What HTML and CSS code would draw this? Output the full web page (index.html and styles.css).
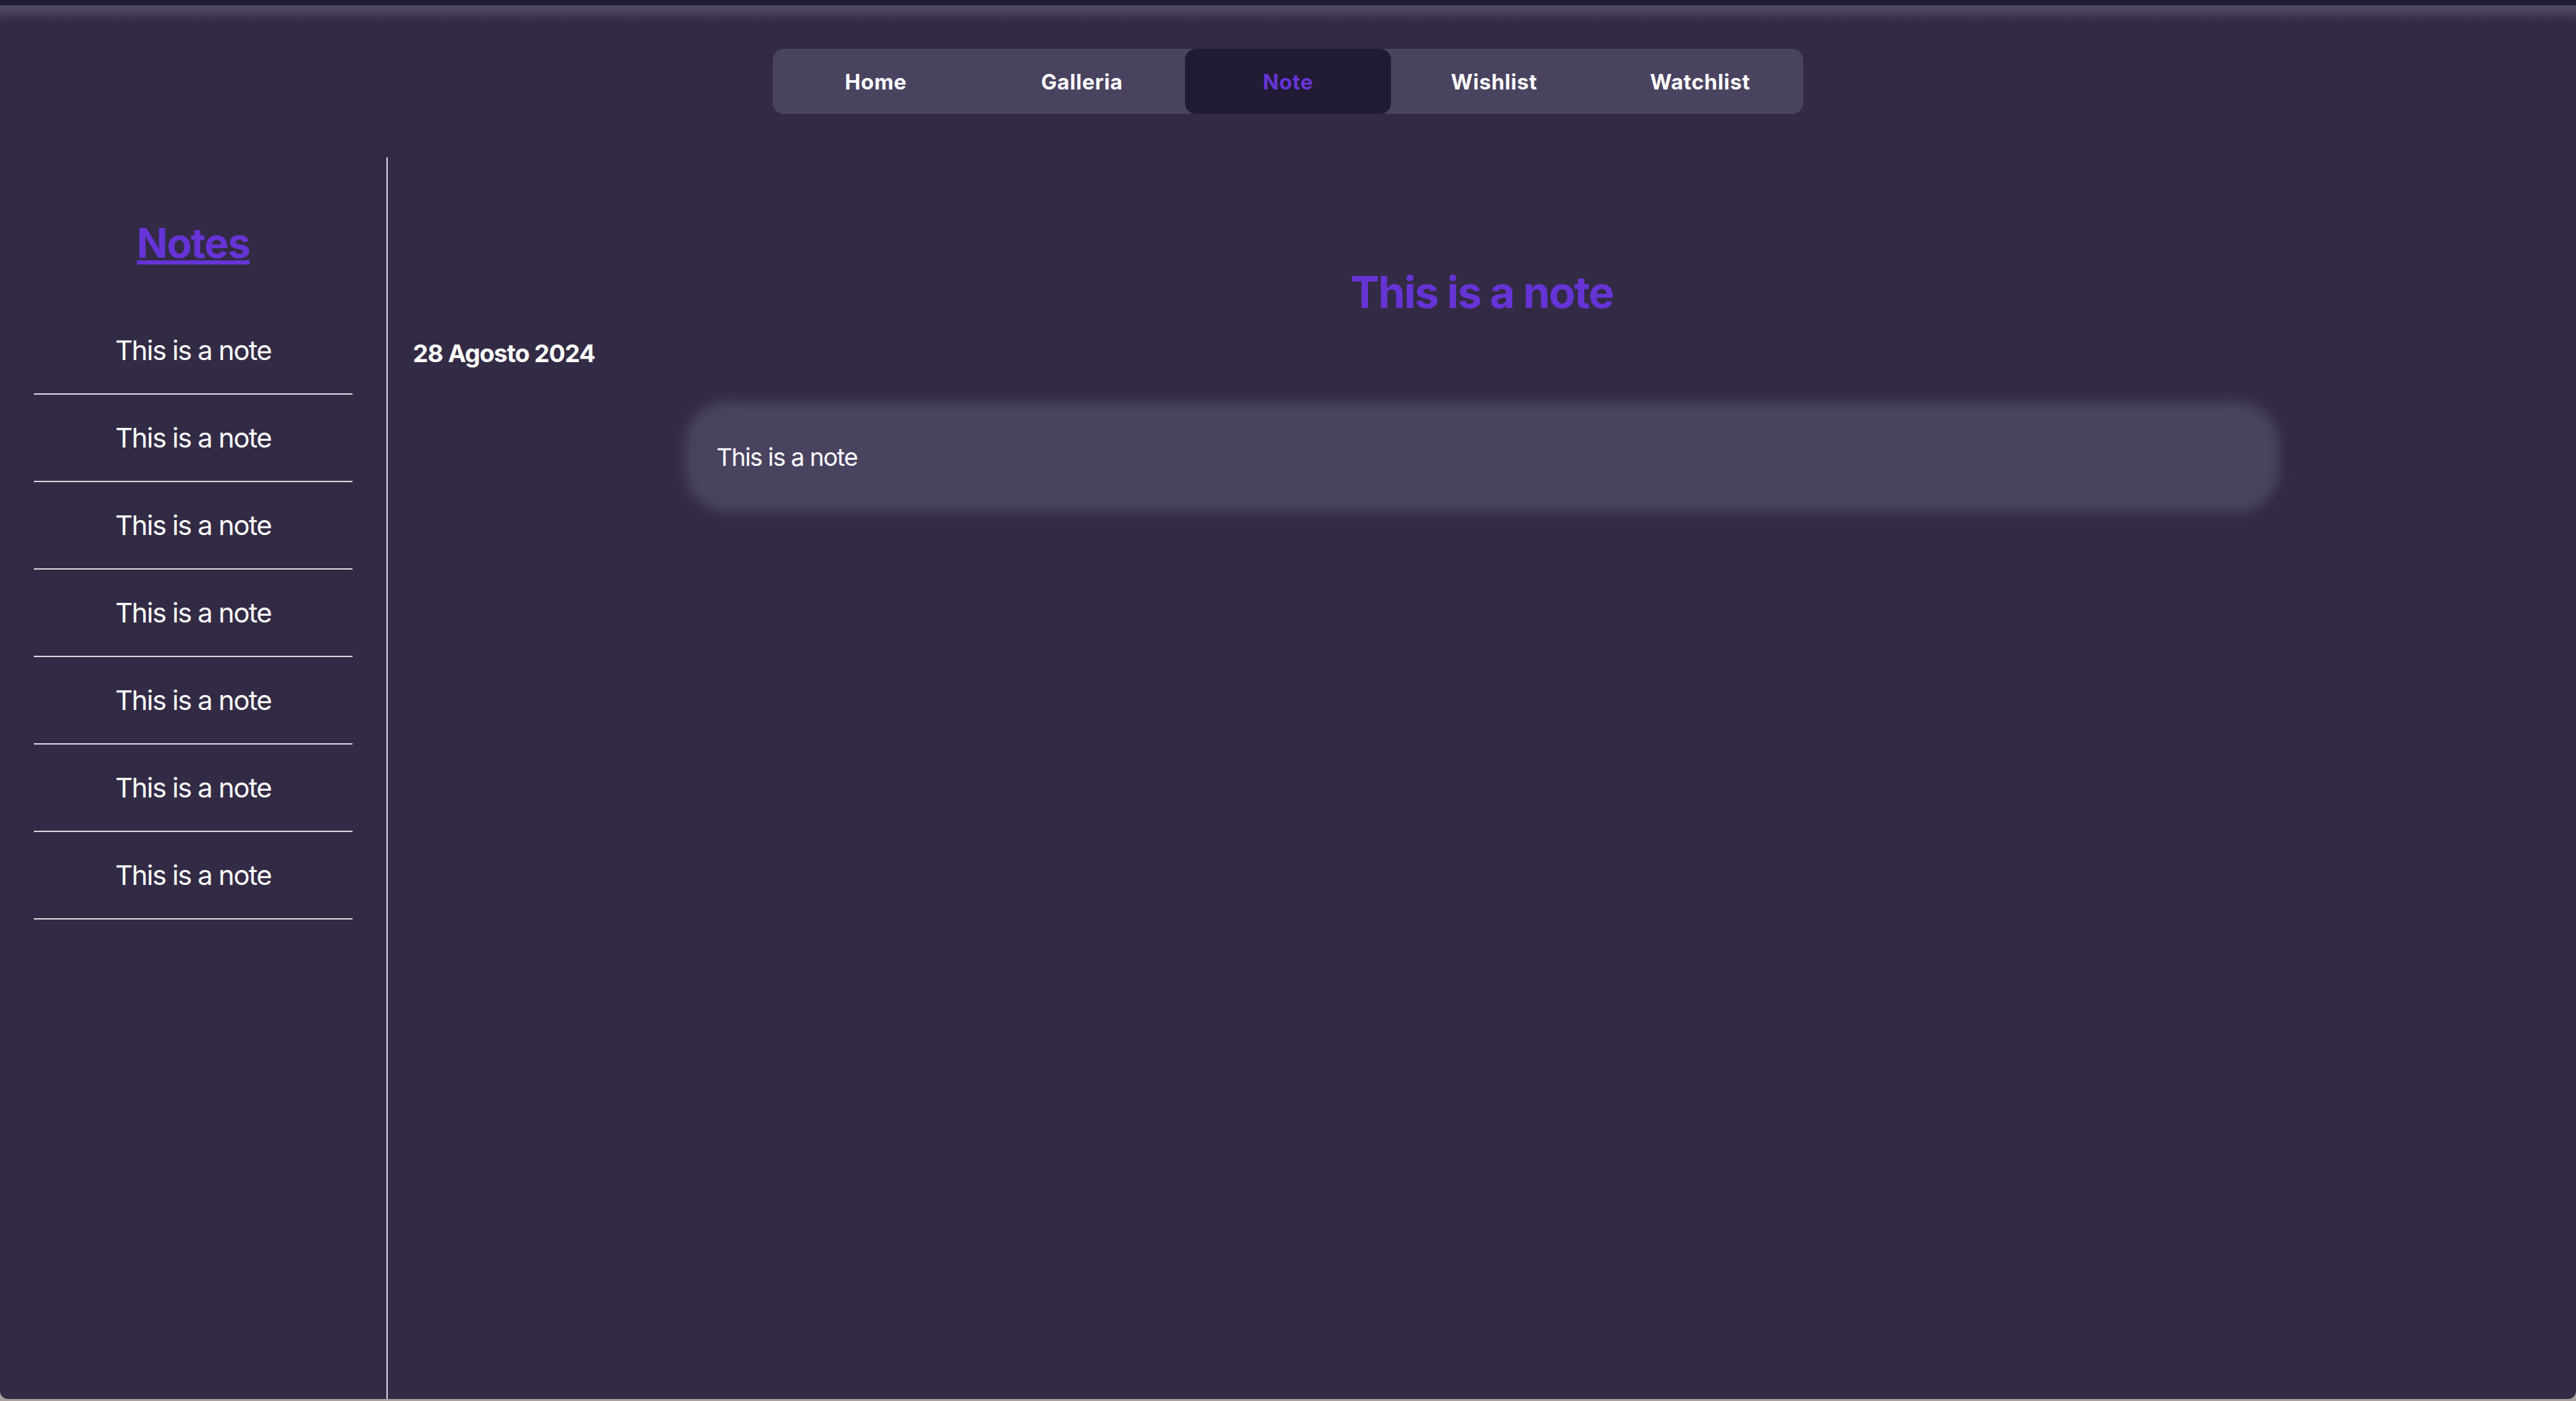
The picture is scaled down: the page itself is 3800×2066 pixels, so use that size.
FILE: index.html
```html
<!DOCTYPE html>
<html lang="it">
<head>
<meta charset="utf-8">
<title>Note</title>
<link rel="stylesheet" href="styles.css">
</head>
<body>
<div class="window">
  <div class="toolbar-edge"></div>
  <div class="shade"></div>
  <div class="page">
    <nav class="nav">
      <a class="nav-item" href="#">Home</a>
      <a class="nav-item" href="#">Galleria</a>
      <a class="nav-item active" href="#">Note</a>
      <a class="nav-item" href="#">Wishlist</a>
      <a class="nav-item" href="#">Watchlist</a>
    </nav>
    <div class="layout">
      <aside class="sidebar">
        <h2 class="sidebar-title"><a href="#">Notes</a></h2>
        <ul class="note-list">
          <li>This is a note</li>
          <li>This is a note</li>
          <li>This is a note</li>
          <li>This is a note</li>
          <li>This is a note</li>
          <li>This is a note</li>
          <li>This is a note</li>
        </ul>
      </aside>
      <main class="content">
        <h1 class="note-title">This is a note</h1>
        <p class="note-date">28 Agosto 2024</p>
        <div class="note-card">This is a note</div>
      </main>
    </div>
  </div>
</div>
</body>
</html>
```

FILE: styles.css
```css
html, body {
  margin: 0;
  padding: 0;
}

body {
  background: #a89f9f;
  font-family: Inter, "Noto Sans", "Liberation Sans", sans-serif;
  color: #ffffff;
  height: 2066px;
  overflow: hidden;
}

.window {
  position: relative;
  height: 2063px;
  background: #332b45;
  border-radius: 0 0 12px 12px;
  overflow: hidden;
  display: flex;
  flex-direction: column;
}

.toolbar-edge {
  height: 8px;
  background: #221c36;
  flex: 0 0 auto;
}

.shade {
  position: absolute;
  left: 0;
  right: 0;
  top: 8px;
  height: 24px;
  background: linear-gradient(to bottom, rgba(255, 255, 255, 0.16), rgba(255, 255, 255, 0));
  pointer-events: none;
  z-index: 5;
}

.page {
  flex: 1 1 auto;
  display: flex;
  flex-direction: column;
  padding-top: 64px;
  min-height: 0;
}

.nav {
  display: flex;
  width: 1520px;
  height: 96px;
  margin: 0 auto;
  background: #4a4360;
  border-radius: 16px;
  flex: 0 0 auto;
}

.nav-item {
  flex: 0 0 304px;
  display: flex;
  align-items: center;
  justify-content: center;
  font-size: 31px;
  letter-spacing: 0.6px;
  font-weight: 700;
  color: #ffffff;
  text-decoration: none;
  border-radius: 16px;
}

.nav-item.active {
  background: #221b35;
  color: #6634d6;
}

.layout {
  flex: 1 1 auto;
  display: flex;
  margin-top: 64px;
  min-height: 0;
}

.sidebar {
  width: 570px;
  flex: 0 0 570px;
  border-right: 2px solid #d7d4dc;
}

.sidebar-title {
  margin: 90px 0 59px;
  text-align: center;
  font-size: 60px;
  line-height: 72px;
  font-weight: 700;
  letter-spacing: -1.4px;
}

.sidebar-title a {
  color: #6634d6;
  text-decoration: underline;
  text-decoration-thickness: 6px;
  text-underline-offset: 4px;
}

.note-list {
  list-style: none;
  margin: 0 50px;
  padding: 0;
}

.note-list li {
  padding: 40px 0 39px;
  font-size: 40px;
  line-height: 48px;
  letter-spacing: -1.5px;
  text-align: center;
  border-bottom: 2px solid #d9d6de;
}

.content {
  flex: 1 1 auto;
}

.note-title {
  margin: 160px 0 0;
  text-align: center;
  font-size: 64px;
  line-height: 77px;
  font-weight: 700;
  letter-spacing: -1.7px;
  color: #6634d6;
}

.note-date {
  margin: 30px 0 0;
  padding-left: 37px;
  font-size: 36px;
  line-height: 44px;
  font-weight: 700;
  letter-spacing: -1px;
}

.note-card {
  position: relative;
  isolation: isolate;
  width: 2352px;
  box-sizing: border-box;
  margin: 49px auto 0;
  padding: 60px 47px;
  font-size: 36px;
  line-height: 44px;
  letter-spacing: -1.3px;
}

.note-card::before {
  content: "";
  position: absolute;
  inset: 0;
  background: #4a4360;
  border-radius: 64px;
  filter: blur(9px);
  z-index: -1;
}
```
